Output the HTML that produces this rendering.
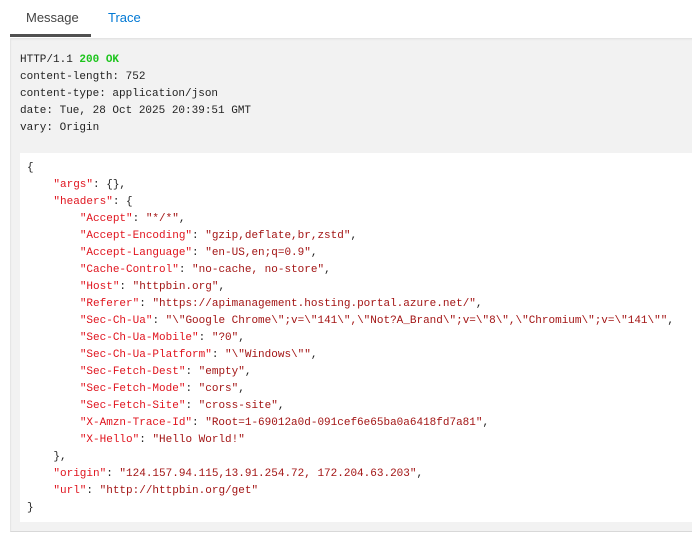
<!DOCTYPE html>
<html><head><style>
body{margin:0;width:692px;height:536px;background:#fff;position:relative;overflow:hidden;font-family:"Liberation Sans",sans-serif}
.tab{position:absolute;top:10px;font-size:13px}
.ul{position:absolute;left:10px;top:34px;width:81px;height:3px;background:#505050}
.panel{position:absolute;left:10px;top:38px;width:700px;height:493px;background:#f2f2f2;box-shadow:inset 0 2px 2px -1px #ddd;border-bottom:1px solid #d8d8d8;border-left:1px solid #e6e6e6}
pre{margin:0;font-family:"Liberation Mono",monospace;font-size:11px;line-height:17px;color:#222;position:absolute}
.hdr{left:20px;top:52px}
.box{position:absolute;left:20px;top:153px;width:680px;height:369px;background:#fff}
.json{left:27px;top:160px}
.g{color:#1cc41c;font-weight:bold}
.k{color:#e0141e}.v{color:#a31515}
</style></head><body>
<div class="tab" style="left:26px;color:#444">Message</div>
<div class="tab" style="left:108px;color:#0078d4">Trace</div>
<div class="ul"></div>
<div class="panel"></div>
<pre class="hdr">HTTP/1.1 <span class="g">200 OK</span>
content-length: 752
content-type: application/json
date: Tue, 28 Oct 2025 20:39:51 GMT
vary: Origin</pre>
<div class="box"></div>
<pre class="json">{
    <span class="k">"args"</span>: {},
    <span class="k">"headers"</span>: {
        <span class="k">"Accept"</span>: <span class="v">"*/*"</span>,
        <span class="k">"Accept-Encoding"</span>: <span class="v">"gzip,deflate,br,zstd"</span>,
        <span class="k">"Accept-Language"</span>: <span class="v">"en-US,en;q=0.9"</span>,
        <span class="k">"Cache-Control"</span>: <span class="v">"no-cache, no-store"</span>,
        <span class="k">"Host"</span>: <span class="v">"httpbin.org"</span>,
        <span class="k">"Referer"</span>: <span class="v">"https://apimanagement.hosting.portal.azure.net/"</span>,
        <span class="k">"Sec-Ch-Ua"</span>: <span class="v">"\"Google Chrome\";v=\"141\",\"Not?A_Brand\";v=\"8\",\"Chromium\";v=\"141\""</span>,
        <span class="k">"Sec-Ch-Ua-Mobile"</span>: <span class="v">"?0"</span>,
        <span class="k">"Sec-Ch-Ua-Platform"</span>: <span class="v">"\"Windows\""</span>,
        <span class="k">"Sec-Fetch-Dest"</span>: <span class="v">"empty"</span>,
        <span class="k">"Sec-Fetch-Mode"</span>: <span class="v">"cors"</span>,
        <span class="k">"Sec-Fetch-Site"</span>: <span class="v">"cross-site"</span>,
        <span class="k">"X-Amzn-Trace-Id"</span>: <span class="v">"Root=1-69012a0d-091cef6e65ba0a6418fd7a81"</span>,
        <span class="k">"X-Hello"</span>: <span class="v">"Hello World!"</span>
    },
    <span class="k">"origin"</span>: <span class="v">"124.157.94.115,13.91.254.72, 172.204.63.203"</span>,
    <span class="k">"url"</span>: <span class="v">"http://httpbin.org/get"</span>
}</pre>
</body></html>
